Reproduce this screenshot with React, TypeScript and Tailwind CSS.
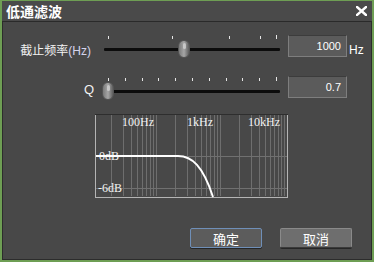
import React from "react";

const cjk = { fontFamily: '"Noto Sans CJK SC", "Noto Sans", sans-serif' };
const sans = { fontFamily: '"Liberation Sans", Arial, sans-serif' };

function Slider({ ticks, thumb }: { ticks: number[]; thumb: number }) {
  return (
    <div className="relative w-[184px] h-[23px]">
      {ticks.map((t, i) => (
        <span
          key={i}
          className={`absolute w-px bg-[#e6e6e6] ${i === ticks.length - 1 ? "top-[0px] h-[4px]" : "top-[1px] h-[3px]"}`}
          style={{ left: t }}
        />
      ))}
      <div className="absolute left-[4px] right-[4px] top-[13px] h-[3px] bg-[#0c0c0c] rounded-[1px]" />
      <div
        className="absolute top-[5px] w-[12px] h-[18px] rounded-[6px] bg-linear-to-r from-[#7a7a7a] via-[#a6a6a6] to-[#5e5e5e] border border-[#555]"
        style={{ left: thumb }}
      >
        <div className="mx-auto mt-[2px] w-[3px] h-[6px] rounded-full bg-[#d8d8d8] opacity-70" />
      </div>
    </div>
  );
}

function ValueBox({ value }: { value: string }) {
  return (
    <div
      className="w-[59px] h-[22px] bg-[#5b5b5b] border border-[#7e7e7e] border-t-[#3c3c3c] flex items-center justify-end pr-[5px] text-[11px] text-white"
      style={sans}
    >
      {value}
    </div>
  );
}

function Graph() {
  const starts = [-3, 61, 125, 189];
  const xs: number[] = [];
  starts.forEach((s) => {
    for (let k = 1; k <= 9; k++) xs.push(s + Math.log10(k) * 64);
  });
  return (
    <svg width="193" height="84" viewBox="0 0 193 84" className="block">
      <rect x="0" y="0" width="193" height="84" fill="#484848" />
      {xs
        .filter((x) => x > 1 && x < 191)
        .map((x, i) => (
          <line key={i} x1={Math.round(x) + 0.5} y1="1" x2={Math.round(x) + 0.5} y2="82" stroke="#6e6e6e" strokeWidth="1" />
        ))}
      <line x1="1" y1="42.5" x2="192" y2="42.5" stroke="#707070" />
      <line x1="1" y1="74.5" x2="192" y2="74.5" stroke="#707070" />
      <line x1="0" y1="0.5" x2="193" y2="0.5" stroke="#2e2e2e" />
      <line x1="0.5" y1="1" x2="0.5" y2="84" stroke="#b4b4b4" />
      <line x1="192.5" y1="1" x2="192.5" y2="84" stroke="#b4b4b4" />
      <line x1="0" y1="83.5" x2="193" y2="83.5" stroke="#b4b4b4" />
      <g fill="#f4f4f4" fontFamily='"Liberation Serif", "DejaVu Serif", serif' fontSize="12">
        <text x="43" y="12" textAnchor="middle">100Hz</text>
        <text x="105" y="12" textAnchor="middle">1kHz</text>
        <text x="169" y="12" textAnchor="middle">10kHz</text>
        <text x="4" y="46">0dB</text>
        <text x="3" y="78">-6dB</text>
      </g>
      <path d="M1 42 L83 42 C97 42 108 52 118 83" fill="none" stroke="#ffffff" strokeWidth="2" />
    </svg>
  );
}

export default function App() {
  const ticks2 = Array.from({ length: 11 }, (_, i) => Math.round(8 + i * 16.8));
  return (
    <div className="w-[374px] h-[262px] bg-[#6e9e54] pt-px px-[2px] pb-[2px] flex flex-col">
      {/* title bar */}
      <div className="h-[21px] bg-[#4a4a4a] border-b border-[#2a2a2a] flex items-center justify-between pl-[4px] pr-[5px]">
        <span className="text-[14px] font-bold text-white leading-none" style={cjk}>
          低通滤波
        </span>
        <svg width="11" height="10" viewBox="0 0 11 10">
          <path d="M1 1 L10 9 M10 1 L1 9" stroke="#ffffff" strokeWidth="2.4" strokeLinecap="square" />
        </svg>
      </div>

      {/* body */}
      <div className="flex-1 bg-[#484848] border-l border-r border-b border-[#2c2c2c] pt-[13px]">
        <div className="flex items-start h-[22px]">
          <div className="w-[91px] pr-[3px] mt-[7px] text-right text-[12px] leading-[16px] text-[#f2f2f2]" style={cjk}>
            截止频率<span className="text-[#d4d4ec]" style={sans}>(Hz)</span>
          </div>
          <div className="ml-[6px]">
            <Slider ticks={[8, 72, 129, 160, 176]} thumb={78} />
          </div>
          <div className="ml-[4px]">
            <ValueBox value="1000" />
          </div>
          <span className="ml-[2px] mt-[8px] text-[12px] leading-[14px] text-white" style={sans}>
            Hz
          </span>
        </div>

        <div className="flex items-start h-[22px] mt-[19px]">
          <div className="w-[91px] mt-[6px] text-right text-[13px] leading-[16px] text-[#f2f2f2]" style={sans}>
            Q
          </div>
          <div className="ml-[6px] mt-[1px]">
            <Slider ticks={ticks2} thumb={2} />
          </div>
          <div className="ml-[4px]">
            <ValueBox value="0.7" />
          </div>
        </div>

        <div className="ml-[92px] mt-[16px]">
          <Graph />
        </div>

        <div className="flex justify-end gap-[18px] pr-[19px] mt-[30px]">
          <button
            className="w-[72px] h-[20px] rounded-[2px] bg-[#5c5c5c] border border-[#6f8fb8] shadow-[0_1px_0_#262626] text-[13px] leading-none text-white"
            style={cjk}
          >
            确定
          </button>
          <button
            className="w-[72px] h-[20px] rounded-[2px] bg-[#6e6e6e] border border-[#8a8a8a] border-b-[#3a3a3a] shadow-[0_1px_0_#262626] text-[13px] leading-none text-white"
            style={cjk}
          >
            取消
          </button>
        </div>
      </div>
    </div>
  );
}
